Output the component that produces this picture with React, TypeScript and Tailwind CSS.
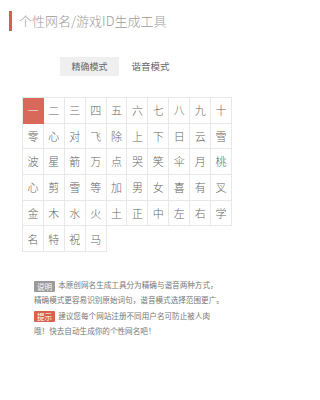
import React from 'react'

const rows: string[][] = [
  ['一', '二', '三', '四', '五', '六', '七', '八', '九', '十'],
  ['零', '心', '对', '飞', '除', '上', '下', '日', '云', '雪'],
  ['波', '星', '箭', '万', '点', '哭', '笑', '伞', '月', '桃'],
  ['心', '剪', '雪', '等', '加', '男', '女', '喜', '有', '叉'],
  ['金', '木', '水', '火', '土', '正', '中', '左', '右', '学'],
  ['名', '特', '祝', '马'],
]

export default function App() {
  const chars = rows.flat()

  return (
    <div className="w-[240px] h-[400px] bg-white font-['Noto_Sans_CJK_SC',sans-serif]">
      {/* Title */}
      <div className="flex items-center pt-[11px] pl-[9px]">
        <span className="w-[3px] h-[20px] bg-[#d6604f]" />
        <h1 className="ml-[7px] text-[13px] leading-[20px] font-light text-[#9b9b9b]">个性网名/游戏ID生成工具</h1>
      </div>

      {/* Mode tabs */}
      <div className="flex justify-center mt-[26px]">
        <button className="w-[59px] h-[19px] flex items-center justify-center bg-[#efefef] text-[9px] text-[#666]">精确模式</button>
        <button className="w-[59px] h-[19px] ml-[2px] flex items-center justify-center text-[9.5px] text-[#666]">谐音模式</button>
      </div>

      {/* Character grid */}
      <div className="mt-[21px] ml-[22px] w-[210px] grid grid-cols-10 border-l border-t border-[#e8e8e8]">
        {chars.map((c, i) => (
          <div
            key={i}
            className={
              i === 0
                ? 'h-[25.7px] flex items-center justify-center border-r border-b border-[#d8685a] bg-[#d8685a] text-white text-[11px] font-light'
                : 'h-[25.7px] flex items-center justify-center border-r border-b border-[#e8e8e8] text-[#666] text-[11px] font-light'
            }
          >
            {c}
          </div>
        ))}
      </div>

      {/* Notes */}
      <div className="mt-[25px] ml-[34px] w-[190px] text-[7.6px] leading-[15.3px] text-[#777]">
        <p>
          <span className="inline-block px-[3px] h-[11px] leading-[11px] rounded-[1px] bg-[#9a9a9a] text-white mr-[3px] align-middle">说明</span>
          <span>本原创网名生成工具分为精确与谐音两种方式，精确模式更容易识别原始词句，谐音模式选择范围更广。</span>
        </p>
        <p>
          <span className="inline-block px-[3px] h-[11px] leading-[11px] rounded-[1px] bg-[#d9604c] text-white mr-[3px] align-middle">提示</span>
          <span>建议您每个网站注册不同用户名可防止被人肉哦！快去自动生成你的个性网名吧！</span>
        </p>
      </div>
    </div>
  )
}
